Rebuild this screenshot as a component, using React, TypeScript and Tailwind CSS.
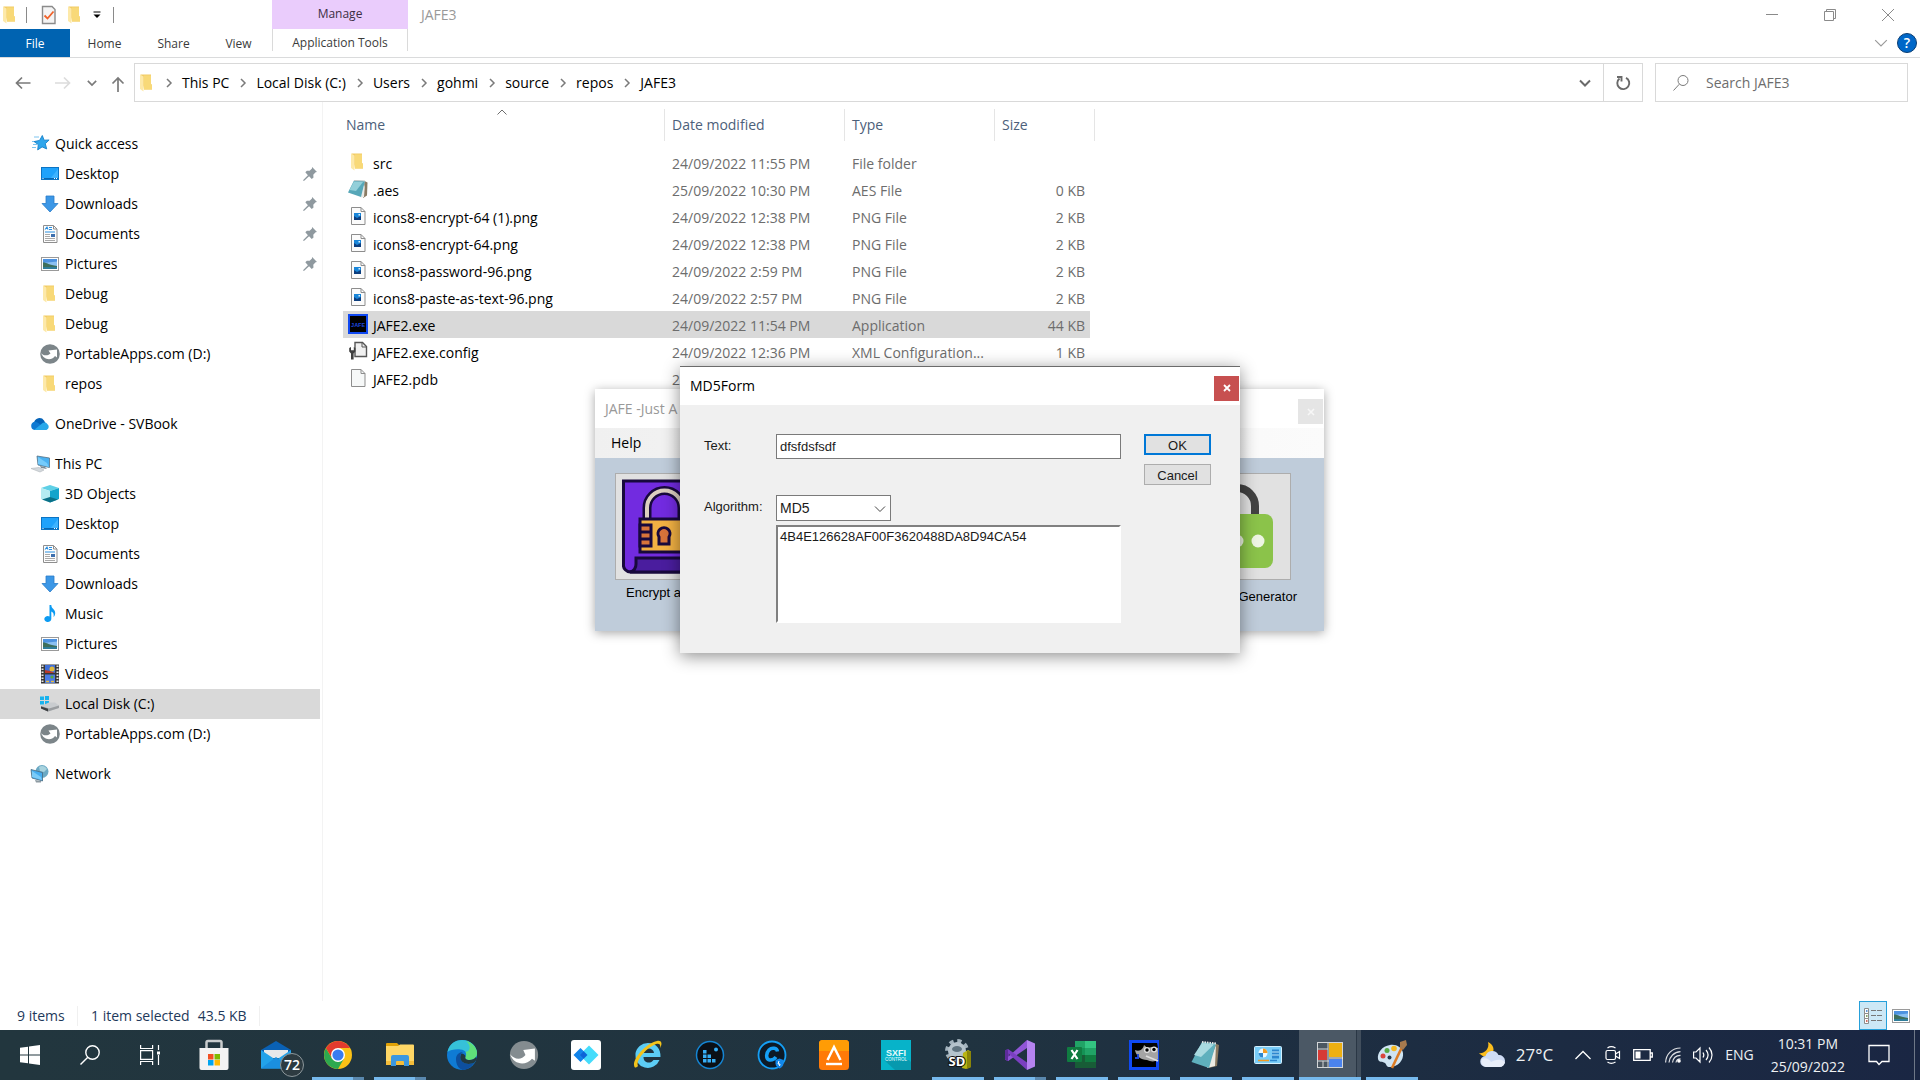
import { useState } from "react";
import type { ReactNode } from "react";

/* ---------- small file / folder icons (20px box) ---------- */

function FolderIcon() {
  return (
    <svg className="w-5 h-5" viewBox="0 0 20 20">
      <path d="M3.500 1.500h10.500v9.500l1 1v4.500H7z" fill="#f2cc66" />
      <path d="M7 2.500h7v8.500l1 1v4.500H7z" fill="#f8d978" />
      <path d="M3 1.500l3.500 2v15L3 16z" fill="#fde9a9" />
    </svg>
  );
}

function StarIcon() {
  return (
    <svg className="w-5 h-5" viewBox="0 0 20 20">
      <path d="M4 3h5M2 7.500h4M3 10.500h4M2 13.500h4" stroke="#7cc4ef" strokeWidth="1" />
      <path d="M12.300 1.500l1.800 4.700 5-.2-3.800 3.700 1.400 5.200-4.600-2-4.400 3 .6-5.300-4.200-3 5.500-1.200z" fill="#2ea6ec" stroke="#1681c9" strokeWidth="0.900" />
    </svg>
  );
}

function DesktopIcon() {
  return (
    <svg className="w-5 h-5" viewBox="0 0 20 20">
      <rect x="1.500" y="3.500" width="17" height="12" fill="#1ea2fb" stroke="#0b74c4" />
      <path d="M10 15l8-10v10z" fill="#3db3ff" />
      <path d="M2 14.500h16" stroke="#0667b3" />
      <path d="M2.500 14.500h1M14 14.500h1M16 14.500h1" stroke="#fff" />
    </svg>
  );
}

function DownloadIcon() {
  return (
    <svg className="w-5 h-5" viewBox="0 0 20 20">
      <path d="M6 2h8v7.500h4L10 18 2 9.500h4z" fill="#3c97e6" stroke="#2a7cc9" strokeWidth="0.800" />
    </svg>
  );
}

function DocumentIcon() {
  return (
    <svg className="w-5 h-5" viewBox="0 0 20 20">
      <path d="M3.500 1.500h10l3.500 3.500v13.500H3.500z" fill="#fdfdfd" stroke="#8e8e8e" />
      <path d="M13.500 1.500v3.500H17" fill="none" stroke="#8e8e8e" />
      <path d="M5 5.500l2-2.500 1 2.500M9 3.500h3M9 5.500h3M5 8h10" stroke="#2b8fe0" strokeWidth="1.100" fill="none" />
      <path d="M5 10.500h5M5 12.500h5M5 14.500h10M5 16.500h10" stroke="#a9a9a9" />
      <rect x="11" y="10" width="4" height="3" fill="#3d6fae" />
    </svg>
  );
}

function PictureIcon() {
  return (
    <svg className="w-5 h-5" viewBox="0 0 20 20">
      <rect x="1.500" y="3.500" width="17" height="13" fill="#fff" stroke="#9a9a9a" />
      <rect x="3" y="5" width="14" height="10" fill="#8cc1f2" />
      <path d="M3 5h14v2.500L3 9z" fill="#4d92e0" />
      <path d="M3 8.500c4 0 6 2.500 14 3.500v1H3z" fill="#3e6f5c" />
      <path d="M3 13h14v2H3z" fill="#2f7d9a" />
    </svg>
  );
}

function PortableIcon() {
  return (
    <svg className="w-5 h-5" viewBox="0 0 20 20">
      <circle cx="10" cy="10" r="9.800" fill="#7c8589" />
      <path d="M1.200 9c1.500 2.500 6 3.500 9.300.5L8.500 6.500 17 5.500v8l-2-1.500c-4 5.500-12 3.500-13.800-3z" fill="#fff" />
      <path d="M2 7.500c1-3 4-5 7.500-4.500C7 4.500 6 7 7 9.500c-2 .5-4-.5-5-2z" fill="#7c8589" />
    </svg>
  );
}

function OneDriveIcon() {
  return (
    <svg className="w-5 h-5" viewBox="0 0 20 20">
      <path d="M4 9a5.500 5.500 0 0 1 10-2.500L16 10l-8 4z" fill="#0563b8" />
      <path d="M4.500 16a4.200 4.200 0 0 1 0-8.200c2 0 4 1.200 6 3L14 16z" fill="#0f7ad2" />
      <path d="M4 16l8-6.500c1-1 3.500-1.500 5 .2A3.500 3.500 0 0 1 16.500 16z" fill="#28a8ea" />
    </svg>
  );
}

function ThisPcIcon() {
  return (
    <svg className="w-5 h-5" viewBox="0 0 20 20">
      <path d="M7 2l12.500 2v9.500L8 11z" fill="#4ab1f1" stroke="#557184" strokeWidth="0.800" />
      <path d="M8 3l9 6 2 4-11-3z" fill="#76cbfa" />
      <path d="M10 12l5 1 2 2-6-1z" fill="#7b8b95" />
      <path d="M1 14.500l8-1 5 2.500-4 2z" fill="#d4d9dd" stroke="#b0b6ba" strokeWidth="0.600" />
    </svg>
  );
}

function CubeIcon() {
  return (
    <svg className="w-5 h-5" viewBox="0 0 20 20">
      <path d="M10 1l9 3-9 3-9-3z" fill="#5fd0e6" />
      <path d="M1 4l9 3v11.500L1 15z" fill="#b5ecf2" />
      <path d="M19 4l-9 3v11.500l9-3.500z" fill="#12a4cc" />
      <path d="M2 15.500l8-2.500 8 2.500-8 3z" fill="#0a7188" />
    </svg>
  );
}

function MusicIcon() {
  return (
    <svg className="w-5 h-5" viewBox="0 0 20 20">
      <path d="M9.500 1h1.800c0 4 4.200 4 3.900 8.500-.1 1.500-1 3-1.700 3.500.8-3-.5-5-2.200-5.500V15a3.500 3 0 1 1-1.800-2.600z" fill="#0c9bf2" />
    </svg>
  );
}

function VideoIcon() {
  return (
    <svg className="w-5 h-5" viewBox="0 0 20 20">
      <rect x="1" y="0.500" width="18" height="19" fill="#383838" />
      <path d="M2.500 1.500v17M17.500 1.500v17" stroke="#e6e6e6" strokeWidth="2" strokeDasharray="1.600 1.400" />
      <rect x="5" y="1" width="10" height="8" fill="#3f6fd8" />
      <rect x="5" y="10.500" width="10" height="8.500" fill="#4a7be6" />
      <circle cx="12" cy="5" r="2.500" fill="#e0b93c" />
      <path d="M5 6l5 1 5 2H5z" fill="#b9392a" />
      <circle cx="12" cy="13" r="1.600" fill="#57a83a" />
      <path d="M6 17.500h3M11 17.500h3" stroke="#e8bd40" strokeWidth="1.500" />
    </svg>
  );
}

function DiskIcon() {
  return (
    <svg className="w-5 h-5" viewBox="0 0 20 20">
      <path d="M0 2.500h4v3.500H0zM5 2h4v4H5zM0 7h4v3.500H0zM5 7h4v4H5z" fill="#19b3ee" />
      <path d="M1 12l8-3.500h6l4 3v2.500L8 17.500l-7-3z" fill="#c9cccf" />
      <path d="M1 12l8 2.500 10-3v2.500L8 17.500l-7-3z" fill="#9a9da0" />
      <path d="M1 12.500l7 2.300v2.700l-7-3z" fill="#3c3f41" />
    </svg>
  );
}

function NetworkIcon() {
  return (
    <svg className="w-5 h-5" viewBox="0 0 20 20">
      <circle cx="12" cy="7.500" r="6.500" fill="#6ba9c4" />
      <path d="M9 3c3-2 6-1 8 2l-3 3-4-1z" fill="#a8d3de" />
      <path d="M1 5.500l11.500 3v8.500L2 14z" fill="#45adf0" stroke="#48687c" strokeWidth="0.800" />
      <path d="M2 7l9 6 1 3-10-3z" fill="#7acbf8" />
      <path d="M5 16l6 1v1.500H6z" fill="#8d9aa2" />
    </svg>
  );
}

function NotepadFileIcon() {
  return (
    <svg className="w-5 h-5" viewBox="0 0 20 20">
      <path d="M16.500 2l3 1.500-.5 13-4 2.500z" fill="#8a7a63" />
      <path d="M17 5l-1 13-3.500.5z" fill="#e9e9e5" />
      <path d="M6 1.500l11 .5-4 16L0 13.500z" fill="#57a7b8" />
      <path d="M6 2.500l9 .5-7 9-6.500-1z" fill="#93cfd9" />
      <path d="M6 1.500l11 .5" stroke="#c3c8c8" />
    </svg>
  );
}

function PngIcon() {
  return (
    <svg className="w-5 h-5" viewBox="0 0 20 20">
      <path d="M3.500 1.500h9.500l4 4V18.500H3.500z" fill="#fbfbfb" stroke="#8d8d8d" />
      <path d="M13 1.500v4h4" fill="none" stroke="#8d8d8d" />
      <rect x="6" y="7" width="7" height="7" fill="#1a86d9" />
      <path d="M6 10l3 2 4-2v4H6z" fill="#0d3e7e" />
      <rect x="10.500" y="8" width="1.500" height="1.500" fill="#d8f0ff" />
    </svg>
  );
}

function JafeIcon() {
  return (
    <svg className="w-5 h-5" viewBox="0 0 20 20">
      <rect x="1" y="1" width="18" height="18" fill="#000" stroke="#1049f2" strokeWidth="2" />
      <text x="10" y="12.500" fill="#1c46d8" fontSize="6" fontWeight="700" textAnchor="middle" fontFamily="Liberation Mono, monospace">JAFE</text>
    </svg>
  );
}

function ConfigIcon() {
  return (
    <svg className="w-5 h-5" viewBox="0 0 20 20">
      <path d="M7 1.500h7.500l4 4v10H7z" fill="#f0f0f0" stroke="#565656" strokeWidth="1.400" />
      <path d="M14 1.500v4.500h4.500" fill="none" stroke="#565656" />
      <path d="M1.200 7v3.500L3 12.500v6h2.600v-6l1.800-2V7L5.800 6v3.200H3V6z" fill="#3f3f3f" />
    </svg>
  );
}

function BlankFileIcon() {
  return (
    <svg className="w-5 h-5" viewBox="0 0 20 20">
      <path d="M3.500 1.500h9.500l4 4V18.500H3.500z" fill="#f6f8f8" stroke="#8d8d8d" />
      <path d="M13 1.500v4h4" fill="none" stroke="#8d8d8d" />
    </svg>
  );
}

function PinIcon() {
  return (
    <svg className="w-3.5 h-3.5" viewBox="0 0 12 12">
      <path d="M7.800 0L12 4.200l-1.200.4-2 2 .2 2.400-1.500 1.300L5.200 8 .8 12 0 11.300 4.200 7 2 4.500l1.300-1.300 2.400.1 2-2z" fill="#8f999f" />
    </svg>
  );
}

function Chevron({ className }: { className: string }) {
  return (
    <svg className={className} viewBox="0 0 12 12" fill="none" stroke="currentColor">
      <path d="M1 3.500l5 5 5-5" />
    </svg>
  );
}

/* ---------- data ---------- */

interface NavItem {
  label: string;
  icon: ReactNode;
  root?: boolean;
  gap?: boolean;
  pinned?: boolean;
  selected?: boolean;
}

const navItems: NavItem[] = [
  { label: "Quick access", icon: <StarIcon />, root: true },
  { label: "Desktop", icon: <DesktopIcon />, pinned: true },
  { label: "Downloads", icon: <DownloadIcon />, pinned: true },
  { label: "Documents", icon: <DocumentIcon />, pinned: true },
  { label: "Pictures", icon: <PictureIcon />, pinned: true },
  { label: "Debug", icon: <FolderIcon /> },
  { label: "Debug", icon: <FolderIcon /> },
  { label: "PortableApps.com (D:)", icon: <PortableIcon /> },
  { label: "repos", icon: <FolderIcon /> },
  { label: "OneDrive - SVBook", icon: <OneDriveIcon />, root: true, gap: true },
  { label: "This PC", icon: <ThisPcIcon />, root: true, gap: true },
  { label: "3D Objects", icon: <CubeIcon /> },
  { label: "Desktop", icon: <DesktopIcon /> },
  { label: "Documents", icon: <DocumentIcon /> },
  { label: "Downloads", icon: <DownloadIcon /> },
  { label: "Music", icon: <MusicIcon /> },
  { label: "Pictures", icon: <PictureIcon /> },
  { label: "Videos", icon: <VideoIcon /> },
  { label: "Local Disk (C:)", icon: <DiskIcon />, selected: true },
  { label: "PortableApps.com (D:)", icon: <PortableIcon /> },
  { label: "Network", icon: <NetworkIcon />, root: true, gap: true },
];

const files = [
  { name: "src", date: "24/09/2022 11:55 PM", type: "File folder", size: "", icon: <FolderIcon /> },
  { name: ".aes", date: "25/09/2022 10:30 PM", type: "AES File", size: "0 KB", icon: <NotepadFileIcon /> },
  { name: "icons8-encrypt-64 (1).png", date: "24/09/2022 12:38 PM", type: "PNG File", size: "2 KB", icon: <PngIcon /> },
  { name: "icons8-encrypt-64.png", date: "24/09/2022 12:38 PM", type: "PNG File", size: "2 KB", icon: <PngIcon /> },
  { name: "icons8-password-96.png", date: "24/09/2022 2:59 PM", type: "PNG File", size: "2 KB", icon: <PngIcon /> },
  { name: "icons8-paste-as-text-96.png", date: "24/09/2022 2:57 PM", type: "PNG File", size: "2 KB", icon: <PngIcon /> },
  { name: "JAFE2.exe", date: "24/09/2022 11:54 PM", type: "Application", size: "44 KB", icon: <JafeIcon /> },
  { name: "JAFE2.exe.config", date: "24/09/2022 12:36 PM", type: "XML Configuration...", size: "1 KB", icon: <ConfigIcon /> },
  { name: "JAFE2.pdb", date: "2", type: "", size: "", icon: <BlankFileIcon /> },
];

const crumbs = ["This PC", "Local Disk (C:)", "Users", "gohmi", "source", "repos", "JAFE3"];

/* ---------- explorer ---------- */

function TitleBar() {
  return (
    <div className="flex h-[29px] items-center">
      <div className="flex w-[272px] items-center">
        <FolderIcon />
        <span className="ml-1.5 h-4 w-px bg-[#8a8a8a]" />
        <button className="ml-3.5" aria-label="Properties">
          <svg className="w-4 h-5" viewBox="0 0 16 20">
            <path d="M1.500 1.500H11l3 3v14H1.500z" fill="#f4f4f4" stroke="#8b8b8b" strokeWidth="1.400" />
            <path d="M3.500 10.500l3 3 6-7" fill="none" stroke="#f0622a" strokeWidth="1.800" />
          </svg>
        </button>
        <button className="ml-2" aria-label="New folder">
          <FolderIcon />
        </button>
        <button className="ml-2" aria-label="Customize Quick Access Toolbar">
          <svg className="w-2 h-2" viewBox="0 0 8 8">
            <path d="M0.500 1h7" stroke="#000" strokeWidth="1" />
            <path d="M0.500 3.500h7L4 7z" fill="#000" />
          </svg>
        </button>
        <span className="ml-3 h-4 w-px bg-[#8a8a8a]" />
      </div>
      <div className="flex h-full w-[136px] items-center justify-center bg-[#eaccfc] pb-0.5 text-xs text-[#3c2f44]">Manage</div>
      <span className="ml-[13px] text-sm text-[#999999]">JAFE3</span>
      <div className="ml-auto flex text-[#8a8a8a]">
        <button className="flex h-7 w-[58px] items-center justify-center" aria-label="Minimize">
          <svg className="w-3 h-3" viewBox="0 0 12 12" stroke="currentColor"><path d="M0 5.500h12" /></svg>
        </button>
        <button className="flex h-7 w-[58px] items-center justify-center" aria-label="Restore">
          <svg className="w-3 h-3" viewBox="0 0 12 12" fill="none" stroke="currentColor"><path d="M0.500 2.500h9v9h-9zM2.500 2.500v-2h9v9h-2" /></svg>
        </button>
        <button className="flex h-7 w-[58px] items-center justify-center" aria-label="Close">
          <svg className="w-3 h-3" viewBox="0 0 12 12" stroke="currentColor"><path d="M0 0l12 12M12 0L0 12" /></svg>
        </button>
        <span className="w-[3px]" />
      </div>
    </div>
  );
}

function RibbonTabs() {
  return (
    <div className="flex h-[29px] items-stretch border-b border-[#dadbdc] text-xs text-[#3b3b3b]">
      <button className="w-[70px] bg-[#0063b1] pt-0.5 text-white">File</button>
      <button className="w-[69px] pt-0.5">Home</button>
      <button className="w-[69px] pt-0.5">Share</button>
      <button className="w-[61px] pt-0.5">View</button>
      <button className="mb-1.5 ml-[3px] w-[136px] border-x border-[#dadada] pt-1.5">Application Tools</button>
      <div className="ml-auto flex items-center gap-[9px] pr-[3px]">
        <button className="text-[#9a9a9a]" aria-label="Minimize the Ribbon"><Chevron className="w-3.5 h-3.5" /></button>
        <button className="flex h-5 w-5 items-center justify-center rounded-full border border-[#0a3d73] bg-[#0067c8] text-sm font-semibold leading-none text-white">?</button>
      </div>
    </div>
  );
}

function AddressBar() {
  return (
    <div className="flex h-11 items-stretch pt-[5px] pr-3 text-sm">
      <div className="flex w-[134px] items-center text-[#7a7a7a]">
        <button className="ml-[15px]" aria-label="Back">
          <svg className="w-4 h-4" viewBox="0 0 16 16" fill="none" stroke="currentColor" strokeWidth="1.700"><path d="M15.500 8H1.500M7 2.500L1.500 8 7 13.500" /></svg>
        </button>
        <button className="ml-6 text-[#dcdcdc]" aria-label="Forward">
          <svg className="w-4 h-4" viewBox="0 0 16 16" fill="none" stroke="currentColor" strokeWidth="1.700"><path d="M0 8h14M9 2.500L14.500 8 9 13.500" /></svg>
        </button>
        <button className="ml-4" aria-label="Recent locations"><Chevron className="w-2.5 h-2.5 stroke-2" /></button>
        <button className="ml-[13px] pt-0.5" aria-label="Up">
          <svg className="w-4 h-4" viewBox="0 0 16 16" fill="none" stroke="currentColor" strokeWidth="1.700"><path d="M8 16V2M2.500 7.500L8 2l5.500 5.500" /></svg>
        </button>
      </div>
      <div className="flex flex-1 items-center border border-[#d9d9d9]">
        <span className="ml-0.5 mr-2"><FolderIcon /></span>
        {crumbs.map((c) => (
          <span key={c} className="flex items-center">
            <svg className="w-2 h-2.5 text-[#7a7a7a]" viewBox="0 0 8 10" fill="none" stroke="currentColor" strokeWidth="1.500"><path d="M2 1l4 4-4 4" /></svg>
            <button className="ml-[9px] mr-2.5">{c}</button>
          </span>
        ))}
        <button className="ml-auto mr-3 text-[#6a6a6a]" aria-label="Previous locations"><Chevron className="w-3 h-3 stroke-2" /></button>
        <button className="flex h-full w-[39px] items-center justify-center border-l border-[#d9d9d9] text-[#6a6a6a]" aria-label="Refresh">
          <svg className="w-4 h-4" viewBox="0 0 16 16" fill="none" stroke="currentColor" strokeWidth="1.900"><path d="M11 2.800A6 6 0 1 1 4.500 3.500M2 2h4.500v4.500" /></svg>
        </button>
      </div>
      <label className="ml-3 flex w-[253px] items-center border border-[#d9d9d9]">
        <svg className="ml-[17px] w-4 h-4 text-[#7a7a7a]" viewBox="0 0 16 16" fill="none" stroke="currentColor"><circle cx="10" cy="5.500" r="5" /><path d="M6.300 9.200L0.500 15.500" /></svg>
        <input className="ml-[17px] w-40 outline-none placeholder:text-[#6d6d6d]" placeholder="Search JAFE3" aria-label="Search JAFE3" />
      </label>
    </div>
  );
}

function Sidebar() {
  return (
    <nav className="w-[323px] shrink-0 border-r border-[#f3f3f3] pt-[27px] text-sm">
      {navItems.map((item, i) => (
        <div key={i} className={item.gap ? "pt-2.5" : ""}>
          <button
            className={`flex h-[30px] w-[320px] items-center gap-[5px] text-left ${item.root ? "pl-[30px]" : "pl-10"} ${
              item.selected ? "bg-[#d9d9d9]" : ""
            }`}
          >
            {item.icon}
            <span>{item.label}</span>
            {item.pinned && <span className="ml-auto mr-[3px]"><PinIcon /></span>}
          </button>
        </div>
      ))}
    </nav>
  );
}

function FileTable() {
  return (
    <table className="ml-5 mt-[7px] w-[752px] table-fixed border-separate border-spacing-0 self-start text-sm text-[#6d6d6d]">
      <colgroup>
        <col className="w-[322px]" />
        <col className="w-[180px]" />
        <col className="w-[150px]" />
        <col className="w-[100px]" />
      </colgroup>
      <thead>
        <tr className="text-left text-[#4c607a]">
          <th className="relative p-0 pb-2 font-normal">
            <div className="flex h-8 items-center border-r border-[#e5e5e5] pl-[3px]">Name</div>
            <svg className="absolute left-[154px] top-0 h-1.5 w-2.5 text-[#6d6d6d]" viewBox="0 0 10 6" fill="none" stroke="currentColor"><path d="M0.500 5.500L5 1l4.500 4.500" /></svg>
          </th>
          <th className="p-0 pb-2 font-normal"><div className="flex h-8 items-center border-r border-[#e5e5e5] pl-[7px]">Date modified</div></th>
          <th className="p-0 pb-2 font-normal"><div className="flex h-8 items-center border-r border-[#e5e5e5] pl-[7px]">Type</div></th>
          <th className="p-0 pb-2 font-normal"><div className="flex h-8 items-center border-r border-[#e5e5e5] pl-[7px]">Size</div></th>
        </tr>
      </thead>
      <tbody>
        {files.map((f) => (
          <tr key={f.name} className={f.name === "JAFE2.exe" ? "[&>td]:bg-[#d9d9d9]" : ""}>
            <td className="p-0">
              <div className="flex h-[27px] items-center gap-[5px] pl-[5px] pt-0.5 text-black">
                <span className="pb-1">{f.icon}</span>
                {f.name}
              </div>
            </td>
            <td className="whitespace-nowrap p-0 pl-[7px] pt-0.5">{f.date}</td>
            <td className="whitespace-nowrap p-0 pl-[7px] pt-0.5">{f.type}</td>
            <td className="border-r-[5px] border-transparent bg-clip-padding p-0 pr-[5px] pt-0.5 text-right">{f.size}</td>
          </tr>
        ))}
      </tbody>
    </table>
  );
}

function StatusBar() {
  return (
    <div className="flex h-[29px] items-center text-sm text-[#1e395b]">
      <span className="w-[78px] border-r border-[#f0f0f0] pl-[17px]">9 items</span>
      <span className="pl-[13px]">1 item selected</span>
      <span className="border-r border-[#f0f0f0] pl-2 pr-3">43.5 KB</span>
      <button className="ml-auto flex h-full w-7 items-center justify-center border border-[#26a0da] bg-[#cce8f6]" aria-label="Details view">
        <svg className="w-5 h-4" viewBox="0 0 20 16" fill="none">
          <path d="M1.500 0.500h4v5h-4zM1.500 5.500h4v5h-4zM1.500 10.500h4v5h-4z" fill="#fff" stroke="#8d8d8d" />
          <path d="M3 3h1.500" stroke="#2b72c4" strokeWidth="1.500" />
          <path d="M3 8h1.500" stroke="#5b8a3a" strokeWidth="1.500" />
          <path d="M3 13h1.500" stroke="#c43c2b" strokeWidth="1.500" />
          <path d="M8 2.500h5M14 2.500h5M8 7.500h5M14 7.500h5M8 12.500h5M14 12.500h5" stroke="#777" />
        </svg>
      </button>
      <button className="ml-1 mr-[9px]" aria-label="Large icons view"><PictureIcon /></button>
    </div>
  );
}

/* ---------- floating windows ---------- */

function JafeWindow() {
  return (
    <section className="absolute left-[595px] top-[389px] flex h-[242px] w-[729px] flex-col bg-white shadow-[0_2px_10px_rgba(0,0,0,0.35)]">
      <header className="flex h-[39px] items-center justify-between pl-2.5 pr-px text-sm text-[#999999]">
        <span>JAFE -Just A</span>
        <button className="mt-1.5 flex h-[25px] w-[25px] items-center justify-center bg-[#e5e5e5] text-[#f7f7f7]" aria-label="Close JAFE">
          <svg className="w-2 h-2" viewBox="0 0 8 8" stroke="currentColor" strokeWidth="1.600"><path d="M1 1l6 6M7 1L1 7" /></svg>
        </button>
      </header>
      <div className="flex h-[30px] items-center bg-linear-to-r from-[#f0f0f0] to-[#fbfbfb] pl-4 text-sm">
        <button>Help</button>
      </div>
      <div className="flex flex-1 justify-between bg-[#bfccda] pl-5 pr-[27px] pt-[15px] font-['Liberation_Sans',sans-serif] text-[13px]">
        <div>
          <button className="flex h-[107px] w-[110px] items-center justify-center border border-[#adadad] bg-[#e1e1e1]" aria-label="Encrypt">
            <svg className="w-24 h-24" viewBox="0 0 96 96" stroke="#18093d" strokeWidth="3">
              <path d="M1.500 2h93v91H9a7 7 0 0 1-7.500-8z" fill="#722be0" />
              <path d="M14 79h80v14H8c4-1 6-4 6-8z" fill="#4a1d9e" />
              <path d="M25 40V29a17.500 17.500 0 0 1 35 0v11" fill="none" strokeWidth="9" />
              <path d="M25 40V29a17.500 17.500 0 0 1 35 0v11" fill="none" stroke="#dccfc0" strokeWidth="4" />
              <rect x="18" y="40" width="52" height="33" fill="#f2b143" />
              <path d="M18 46h11v21H18z" fill="#d8743a" />
              <path d="M18 53h11M18 60h11" />
              <path d="M37 65V58a6 6 0 1 1 10 0v7z" fill="#d8743a" />
            </svg>
          </button>
          <div className="pl-[11px] pt-[3px]">Encrypt a</div>
        </div>
        <div className="flex flex-col items-end">
          <button className="mr-1.5 flex h-[107px] w-[110px] items-center justify-center border border-[#adadad] bg-[#e1e1e1]" aria-label="Password generator">
            <svg className="w-24 h-24" viewBox="0 0 96 96">
              <path d="M31 40V27a18 18 0 0 1 36 0v13" fill="none" stroke="#424242" strokeWidth="8" />
              <rect x="12" y="35" width="73" height="54" rx="8" fill="#8bc34a" />
              <circle cx="28" cy="62" r="6.500" fill="#eef5e3" />
              <circle cx="49" cy="62" r="6.500" fill="#eef5e3" />
              <circle cx="70" cy="62" r="6.500" fill="#eef5e3" />
            </svg>
          </button>
          <div className="pt-[7px]">Generator</div>
        </div>
      </div>
    </section>
  );
}

function Md5Dialog() {
  const [text, setText] = useState("dfsfdsfsdf");
  return (
    <section className="absolute left-[680px] top-[366px] w-[560px] border-t border-[#6b6b6b] bg-[#f0f0f0] shadow-[0_3px_16px_rgba(0,0,0,0.45)]">
      <header className="flex h-[38px] items-center justify-between bg-white pl-2.5 pr-px text-sm">
        <span>MD5Form</span>
        <button className="mt-1 flex h-[25px] w-[25px] items-center justify-center bg-[#c75050] text-white" aria-label="Close MD5Form">
          <svg className="w-2 h-2" viewBox="0 0 8 8" stroke="currentColor" strokeWidth="1.800"><path d="M1 1l6 6M7 1L1 7" /></svg>
        </button>
      </header>
      <div className="flex gap-[23px] pb-[30px] pl-6 pt-[29px] font-['Liberation_Sans',sans-serif] text-[13px] text-[#1a1a1a]">
        <div className="w-[417px]">
          <div className="flex items-center">
            <label htmlFor="md5-text" className="w-[72px] pb-0.5">Text:</label>
            <input
              id="md5-text"
              className="h-[25px] flex-1 border border-[#7a7a7a] bg-white px-[3px] outline-none"
              value={text}
              onChange={(e) => setText(e.target.value)}
            />
          </div>
          <div className="mt-9 flex items-center">
            <label htmlFor="md5-algorithm" className="w-[72px] pb-0.5">Algorithm:</label>
            <div className="relative">
              <select id="md5-algorithm" className="h-[26px] w-[115px] appearance-none border border-[#7a7a7a] bg-white px-[3px] text-sm" defaultValue="MD5">
                <option>MD5</option>
              </select>
              <span className="pointer-events-none absolute right-[5px] top-2 text-[#444]"><Chevron className="w-3 h-3" /></span>
            </div>
          </div>
          <textarea
            aria-label="Hash"
            readOnly
            className="ml-[72px] mt-1 block h-[98px] w-[345px] resize-none border-2 border-b-white border-l-[#808080] border-r-white border-t-[#808080] bg-white px-0.5 outline-none"
            value="4B4E126628AF00F3620488DA8D94CA54"
          />
        </div>
        <div className="flex w-[67px] flex-col gap-[9px]">
          <button className="h-[21px] border-2 border-[#0078d7] bg-[#e1e1e1] pt-0.5 leading-4">OK</button>
          <button className="h-[21px] border border-[#adadad] bg-[#e1e1e1] pt-0.5 leading-4">Cancel</button>
        </div>
      </div>
    </section>
  );
}

/* ---------- taskbar ---------- */

const store = (
  <svg className="w-8 h-8" viewBox="0 0 32 32">
    <path d="M8.500 12V3.500a1.500 1.500 0 0 1 1.500-1.500h12a1.500 1.500 0 0 1 1.500 1.500V12" fill="none" stroke="#c9cccd" strokeWidth="2.500" />
    <path d="M1.500 9h29v20a2 2 0 0 1-2 2h-25a2 2 0 0 1-2-2z" fill="#f3f3f3" />
    <path d="M10 15h5.500v5.500H10z" fill="#f25022" /><path d="M16.500 15H22v5.500h-5.500z" fill="#7fba00" />
    <path d="M10 21h5.500v5.500H10z" fill="#00a4ef" /><path d="M16.500 21H22v5.500h-5.500z" fill="#ffb900" />
  </svg>
);

const mail = (
  <span className="relative">
    <svg className="w-8 h-8" viewBox="0 0 32 32">
      <path d="M1 11L16 2l15 9v6H1z" fill="#0a61b4" />
      <path d="M4 11h24v8H4z" fill="#e8e9ea" />
      <path d="M1 11l15 10L31 11v18.500H1z" fill="#22a2ea" />
      <path d="M1 29.500L16 18l15 11.500z" fill="#1b8fdf" />
    </svg>
    <span className="absolute -right-3 top-3.5 flex h-6 w-6 items-center justify-center rounded-full border border-[#8c979b] bg-[#2d3b41] text-sm font-semibold leading-none text-white">72</span>
  </span>
);

const chrome = (
  <svg className="w-8 h-8" viewBox="0 0 32 32">
    <circle cx="16" cy="16" r="14" fill="#fbc116" />
    <path d="M3.900 9A14 14 0 0 0 16 30l6-10.500-6 3.500L10 19.500z" fill="#2da94f" />
    <path d="M16 9h12.100A14 14 0 0 0 3.900 9L10 19z" fill="#e33b2e" />
    <circle cx="16" cy="16" r="7" fill="#fff" /><circle cx="16" cy="16" r="5.600" fill="#3a7cf0" />
  </svg>
);

const explorer = (
  <svg className="w-8 h-8" viewBox="0 0 32 32">
    <path d="M2 5a1 1 0 0 1 1-1h10l3 3H2z" fill="#e0a106" />
    <path d="M2 7h12l2-1.500h13a1 1 0 0 1 1 1V26H2z" fill="#ffd766" />
    <path d="M2 22h28v4H2z" fill="#f5bd3a" />
    <path d="M7 27v-9a2 2 0 0 1 2-2h14a2 2 0 0 1 2 2v9h-5v-4a1 1 0 0 0-1-1h-6a1 1 0 0 0-1 1v4z" fill="#3c98e0" />
  </svg>
);

const edge = (
  <svg className="w-8 h-8" viewBox="0 0 32 32">
    <circle cx="16" cy="16" r="15" fill="#0f7bd4" />
    <path d="M1.500 13C3 5 9 1 16 1c9 0 15 6.500 15 13 0 5-4 7-7.500 7-3 0-5-1.500-4-3 2-3 .5-7-5-7.500C9 10 4 11 1.500 13z" fill="#36c1d8" />
    <path d="M20 2c6.500 1.500 11 7 11 12 0 5-4 7-7.500 7-3 0-5-1.500-4-3 1-2 1-3.500 0-5C25 12 25 6 20 2z" fill="#5fe07a" />
    <path d="M10 20c0-4 3-7 7-7-2.500 1.500-3.500 4-2.500 7 1.500 4.500 8 6.500 14 3.500C25 28.500 21 31 16.500 31 12 29.500 10 25 10 20z" fill="#0d4f9e" />
    <path d="M19.500 18c-1 1.500 1 3 4 3 2.500 0 5-1 6.500-3l1 2-2.500 3.500c-6 3-12.500 1-14-3.500-.5-2 0-4 1-5.500 2 0 4 1.500 4 3.500z" fill="#213840" />
  </svg>
);

const portable = (
  <svg className="w-8 h-8" viewBox="-1 -1 22 22">
    <circle cx="10" cy="10" r="9.700" fill="#848c90" />
    <path d="M0.500 9.500c3 4 8 4 10.500 .500L9.500 6.500 17.500 5.500v8.500l-2-1.500c-4 5-12.500 4.500-15-3z" fill="#fff" />
  </svg>
);

const diamonds = (
  <svg className="w-8 h-8" viewBox="0 0 32 32">
    <rect x="1" y="1" width="30" height="30" rx="3" fill="#fff" />
    <path d="M10.500 9l7 7-7 7-7-7z" fill="#1183ea" /><path d="M19 6.500l9.500 9.500L19 25.500 9.500 16z" fill="#45dcfb" />
    <path d="M13.500 12l4 4-4 4-4-4z" fill="#0d65d8" />
  </svg>
);

const ie = (
  <svg className="w-8 h-8" viewBox="0 0 32 32">
    <path d="M16 4a12.500 12.500 0 1 0 11.500 17h-6c-2.500 4-10 3.500-10-3H28.500C29 10 24 4 16 4zm-4.500 10c.5-6 10-6 10.500 0z" fill="#5ccdf5" fillRule="evenodd" />
    <path d="M2.500 28C-1 21 14 4 25 2c5-1 5.500 3 3 7 1-4-1-5-4-4C14 9 3 22 6 27c-1.500 1.500-2.500 2-3.500 1z" fill="#f3c31b" />
  </svg>
);

const blocks = (
  <svg className="w-8 h-8" viewBox="0 0 32 32">
    <circle cx="16" cy="16" r="13.500" fill="#0b1016" stroke="#1585d3" strokeWidth="1.500" />
    <path d="M9 11h3.500v3.500H9zM9 15.500h3.500V19H9zM9 20h3.500v3.500H9zM13.500 15.500H17V19h-3.500zM13.500 20H17v3.500h-3.500zM18 20h3.500v3.500H18z" fill="#36aef6" />
    <circle cx="22" cy="10.500" r="2" fill="#36aef6" />
  </svg>
);

const cleaner = (
  <svg className="w-8 h-8" viewBox="0 0 32 32">
    <circle cx="16" cy="16" r="13.500" fill="#0d1a26" stroke="#159ff5" strokeWidth="1.800" />
    <path d="M21.500 12.500c-.5-3.500-5.500-4.500-8.500-1.500s-3.500 9 .5 10c3 .5 5-1 6.500-3" fill="none" stroke="#159ff5" strokeWidth="3.500" />
    <path d="M19.500 21l4-1.500 4 1.500v3.500c0 2.500-2 4-4 5-2-1-4-2.500-4-5z" fill="#1387ea" />
    <path d="M23 22l-1 3h2l-.5 2" stroke="#fff" fill="none" />
  </svg>
);

const orange = (
  <svg className="w-8 h-8" viewBox="0 0 32 32">
    <rect x="1" y="1" width="30" height="30" rx="3.500" fill="#ff7a08" />
    <path d="M1 4.500A3.500 3.500 0 0 1 4.500 1h23A3.500 3.500 0 0 1 31 4.500V12H1z" fill="#ff9c05" />
    <path d="M9.500 21L16 8l6.500 13" fill="none" stroke="#fff" strokeWidth="2.500" />
    <path d="M8 25h16" stroke="#fff" strokeWidth="2.400" />
  </svg>
);

const sxfi = (
  <svg className="w-8 h-8" viewBox="0 0 32 32">
    <rect x="1" y="1" width="30" height="30" fill="#07b3c9" />
    <path d="M4 21h25l2 2v8H15z" fill="#0799ae" />
    <text x="16" y="16.500" fill="#e8fbfd" fontSize="9" fontWeight="700" textAnchor="middle" fontFamily="Liberation Sans, sans-serif">SXFI</text>
    <text x="16" y="21.500" fill="#e8fbfd" fontSize="4.500" textAnchor="middle" fontFamily="Liberation Sans, sans-serif">CONTROL</text>
  </svg>
);

const sdGear = (
  <svg className="w-8 h-8" viewBox="0 0 32 32">
    <circle cx="15" cy="12" r="10" fill="none" stroke="#a3b3bd" strokeWidth="4" strokeDasharray="4.200 3.650" />
    <circle cx="15" cy="12" r="9" fill="#b5c3cc" /><ellipse cx="15" cy="10" rx="5" ry="3" fill="#607480" />
    <path d="M21 14l5-3 3 1.500V28l-5 2-4-1z" fill="#b9b312" /><path d="M25 12l4 .5V28l-4 2z" fill="#8b8508" />
    <text x="15" y="27" fill="#fff" stroke="#111" strokeWidth="2" paintOrder="stroke" fontSize="13" fontWeight="700" textAnchor="middle" fontFamily="Open Sans, sans-serif">SD</text>
  </svg>
);

const visualStudio = (
  <svg className="w-8 h-8" viewBox="0 0 32 32">
    <path d="M1 12v8.500l3 1.500L23.500 7V1L5 19V13z" fill="#6a32ac" />
    <path d="M4 22L1 20.500 23 1v8z" fill="#9055d6" />
    <path d="M1 11.500l3-1.500L23 23.500V31z" fill="#7a3fc0" />
    <path d="M1 11.500l3-1.500v12l-3-1.500z" fill="#5d2b9a" />
    <path d="M23 1l8 3.500v23L23 31z" fill="#b583f0" />
  </svg>
);

const excel = (
  <svg className="w-8 h-8" viewBox="0 0 32 32">
    <path d="M9 2h10v14H9z" fill="#21a366" /><path d="M19 2h11v7H19z" fill="#33c481" />
    <path d="M19 9h11v7H19z" fill="#21a366" /><path d="M9 9h10v7H9z" fill="#149255" />
    <path d="M9 16h10v13H9z" fill="#185c37" /><path d="M19 16h11v7H19z" fill="#107c41" /><path d="M19 23h11v6H19z" fill="#185c37" />
    <rect x="1" y="8" width="15" height="15" rx="1" fill="#107c41" />
    <path d="M5.500 11l6 9M11.500 11l-6 9" stroke="#fff" strokeWidth="2.200" />
  </svg>
);

const jafe = (
  <svg className="w-8 h-8" viewBox="0 0 32 32">
    <rect x="2.500" y="2.500" width="27" height="27" fill="#000" stroke="#1049f2" strokeWidth="3" />
    <path d="M7 11c5 2 8-1 9-5l3 2h11v12c-2 3-7 3-11 1-6 0-11-4-12-10z" fill="#a4a4a4" />
    <path d="M15 4h14l1 5-6-1-5 1z" fill="#050505" />
    <circle cx="19" cy="11" r="3" fill="#e3e3e3" /><circle cx="26" cy="10.500" r="3" fill="#e3e3e3" />
    <circle cx="19" cy="11" r="1.700" fill="#000" /><circle cx="26" cy="10.500" r="1.700" fill="#000" />
    <path d="M18 17l12 5" stroke="#ddd" strokeWidth="1.800" />
    <path d="M7 19h4M10 15v4" stroke="#1c46d8" strokeWidth="1.800" />
  </svg>
);

const notepad = (
  <svg className="w-8 h-8" viewBox="0 0 32 32">
    <path d="M24 4l5 2-2 21-8 2z" fill="#8b7a60" /><path d="M26 6l-1 21-8 2z" fill="#ecebe4" />
    <path d="M12 3l14 1.500L19 29 1.500 23z" fill="#5fb0bd" /><path d="M12 4l12 1.500L11 18l-7-2z" fill="#a9dae0" />
    <path d="M12 3l14 1.500" stroke="#e3e6e6" strokeWidth="2" strokeDasharray="1.500 1" />
  </svg>
);

const panel = (
  <svg className="w-8 h-8" viewBox="0 0 32 32">
    <rect x="2.500" y="7.500" width="27" height="17" rx="1" fill="#79cdf8" stroke="#d3effd" />
    <circle cx="11" cy="14" r="4.500" fill="#eef9ff" /><path d="M11 14V9.500a4.500 4.500 0 0 1 4.500 4.500z" fill="#f29b22" /><path d="M11 14H6.500a4.500 4.500 0 0 0 4.500 4.500z" fill="#2d87cf" />
    <path d="M20 10.500h7v9h-7z" fill="#2d87cf" /><path d="M20 13h7M20 16h7" stroke="#bfe8fb" />
    <path d="M6 21.500h11" stroke="#f29b22" strokeWidth="1.500" /><path d="M18 21.500h7" stroke="#2d87cf" strokeWidth="1.500" />
  </svg>
);

const winForms = (
  <svg className="w-8 h-8" viewBox="0 0 32 32">
    <rect x="3.500" y="3.500" width="25" height="25" fill="#4c5761" stroke="#d3d5d7" />
    <path d="M14 3v26M3 10h11M3 22h26M9 22v7" stroke="#d3d5d7" fill="none" />
    <rect x="15" y="4" width="13" height="14" fill="#eeb011" /><rect x="4" y="11" width="9" height="10" fill="#d63a35" />
    <rect x="15" y="20" width="13" height="8" fill="#4b83ee" /><path d="M15 19h14" stroke="#fff" />
  </svg>
);

const paint = (
  <svg className="w-8 h-8" viewBox="0 0 32 32">
    <path d="M14 6C6 7 1 14 2 20c1 4 4 2 7 4 2 2 1 4 5 4 8 0 14-7 13-14-1-6-7-9-13-8z" fill="#cfe4f2" />
    <circle cx="7" cy="17" r="2.500" fill="#d9463c" /><circle cx="11" cy="11.500" r="2.500" fill="#57a944" /><circle cx="18" cy="9.500" r="2.800" fill="#f5b922" />
    <circle cx="13.500" cy="18.500" r="2" fill="#24384a" />
    <path d="M26 8L16 29" stroke="#dd7c24" strokeWidth="2.600" /><path d="M24 3l6-2 1 5-4 5-3-2z" fill="#a77a4e" />
  </svg>
);

const apps = [
  { name: "Microsoft Store", icon: store },
  { name: "Mail", icon: mail },
  { name: "Google Chrome", icon: chrome, state: "stack" },
  { name: "File Explorer", icon: explorer, state: "stack" },
  { name: "Microsoft Edge", icon: edge },
  { name: "PortableApps", icon: portable },
  { name: "Sync", icon: diamonds },
  { name: "Internet Explorer", icon: ie },
  { name: "Blocks", icon: blocks },
  { name: "Cleaner", icon: cleaner },
  { name: "Avast", icon: orange },
  { name: "SXFI Control", icon: sxfi },
  { name: "SD", icon: sdGear, state: "open" },
  { name: "Visual Studio", icon: visualStudio, state: "stack" },
  { name: "Excel", icon: excel, state: "open" },
  { name: "JAFE", icon: jafe, state: "open" },
  { name: "Notepad", icon: notepad, state: "open" },
  { name: "Control Panel", icon: panel, state: "open" },
  { name: "MD5Form", icon: winForms, state: "active" },
  { name: "Paint", icon: paint, state: "open" },
];

function Taskbar() {
  return (
    <footer className="flex h-[50px] bg-linear-to-r from-[#22363e] via-[#203340] to-[#1a2643] text-sm text-[#eef1f3]">
      <button className="flex w-[60px] items-center justify-center" aria-label="Start">
        <svg className="w-5 h-5" viewBox="0 0 20 20" fill="#fff"><path d="M0 2.800L8 1.700v7.800H0zM9 1.500L20 0v9.500H9zM0 10.500h8v7.800L0 17.200zM9 10.500h11V20L9 18.500z" /></svg>
      </button>
      <button className="flex w-[60px] items-center justify-center" aria-label="Search">
        <svg className="w-5 h-5" viewBox="0 0 20 20" fill="none" stroke="#fff" strokeWidth="1.400"><circle cx="12.500" cy="7.500" r="6.700" /><path d="M7.800 12.200L0.500 19.500" /></svg>
      </button>
      <button className="mr-[3px] flex w-[60px] items-center justify-center" aria-label="Task View">
        <svg className="w-5 h-5" viewBox="0 0 20 20" fill="none" stroke="#fff" strokeWidth="1.200"><path d="M0.600 0v3.500h12V0M0.600 5.600h12v8.800H.6zM0.600 20v-3.500h12V20M18.500 0v5M18.500 10v10" /><rect x="17" y="6.500" width="3" height="3" fill="#fff" stroke="none" /></svg>
      </button>
      {apps.map((app) => (
        <button
          key={app.name}
          aria-label={app.name}
          className={`relative flex w-[62px] items-center justify-center ${app.state === "active" ? "bg-[#4b5865]" : ""}`}
        >
          {app.icon}
          {app.state === "active" && <span className="absolute inset-y-0 right-0 w-[5px] border-l border-[#2a3745] bg-[#414e5c]" />}
          {app.state && (
            <span className={`absolute bottom-0 flex h-[3px] ${app.state === "active" ? "inset-x-0" : "inset-x-[5px]"}`}>
              <span className="flex-1 bg-[#76b9ed]" />
              {app.state === "stack" && <span className="w-[11px] bg-[#5a88ae]" />}
            </span>
          )}
        </button>
      ))}
      <div className="ml-auto flex items-center">
        <button className="flex items-center gap-2.5 text-[17px]">
          <svg className="w-7 h-7" viewBox="0 0 28 28">
            <path d="M10 1c5 2 8 8 3 13-3 3-9 2-12-2 5 1 11-4 9-11z" fill="#fbbd1d" />
            <path d="M8 26a5.500 5.500 0 0 1-.5-11 7 7 0 0 1 13-1 6 6 0 0 1 1 12z" fill="#cfdcf5" />
            <path d="M8 26a5.500 5.500 0 0 1-4-8c4-2 8 1 9 3 3-2 10-4 14 0-.5 3-2.500 5-6 5z" fill="#e8eef9" />
          </svg>
          27°C
        </button>
        <button className="ml-[22px]" aria-label="Show hidden icons">
          <svg className="w-4 h-4" viewBox="0 0 16 16" fill="none" stroke="#fff" strokeWidth="1.300"><path d="M0.500 12L8 4.500l7.500 7.500" /></svg>
        </button>
        <button className="ml-3.5" aria-label="Meet Now">
          <svg className="w-4 h-[18px]" viewBox="0 0 16 18" fill="none" stroke="#fff" strokeWidth="1.200"><rect x="1" y="4.500" width="9.500" height="9" rx="1.500" /><path d="M10.500 8l4-2.500v7L10.500 10M2.500 2c2-1.500 5.500-1.500 8 0M2.500 16c2 1.500 5.500 1.500 8 0" /></svg>
        </button>
        <button className="ml-3" aria-label="Battery">
          <svg className="w-5 h-3" viewBox="0 0 20 12" fill="none" stroke="#fff" strokeWidth="1.300"><path d="M0.700 0.700h16.500v10.600H.7zM17.500 4h1.800v4h-1.800" /><path d="M2.500 2.500h5v7h-5z" fill="#fff" stroke="none" /></svg>
        </button>
        <button className="ml-3" aria-label="Network">
          <svg className="w-4 h-4" viewBox="0 0 16 16" fill="none" stroke="#fff" strokeWidth="1.200"><path d="M0.600 15.500C1 7 7 1 15.500 1M4 15.500C4.500 9.500 9 5 15.500 4.700M7.500 15.500c.5-4 3.500-7 8-7.200M11 15.500c.3-2 2-3.500 4.500-3.600" opacity="0.850" /><circle cx="14" cy="14" r="1.800" fill="#fff" stroke="none" /></svg>
        </button>
        <button className="ml-3" aria-label="Volume">
          <svg className="w-5 h-[18px]" viewBox="0 0 20 18" fill="none" stroke="#fff" strokeWidth="1.200"><path d="M0.600 6v6H3l4 4V2L3 6zM10 6.500c1 1.500 1 3.500 0 5M13 4c2.500 3 2.500 7 0 10M16 1.500c4 4.500 4 10.500 0 15" /></svg>
        </button>
        <button className="ml-3">ENG</button>
        <button className="ml-[17px] text-center leading-[23px]">10:31 PM<br />25/09/2022</button>
        <button className="ml-[23px]" aria-label="Notifications">
          <svg className="w-[22px] h-[22px]" viewBox="0 0 22 22" fill="none" stroke="#fff" strokeWidth="1.300"><path d="M1 1.500h20v16h-7L11 20.500l-2.500-3H1z" /></svg>
        </button>
        <span className="ml-6 h-[50px] w-[6px] border-l border-[#6e7787]" />
      </div>
    </footer>
  );
}

export default function App() {
  return (
    <div className="relative flex h-screen w-full flex-col overflow-hidden bg-white font-['Open_Sans','Noto_Sans',sans-serif] text-black">
      <TitleBar />
      <RibbonTabs />
      <AddressBar />
      <main className="flex min-h-0 flex-1">
        <Sidebar />
        <FileTable />
      </main>
      <StatusBar />
      <Taskbar />
      <JafeWindow />
      <Md5Dialog />
    </div>
  );
}
